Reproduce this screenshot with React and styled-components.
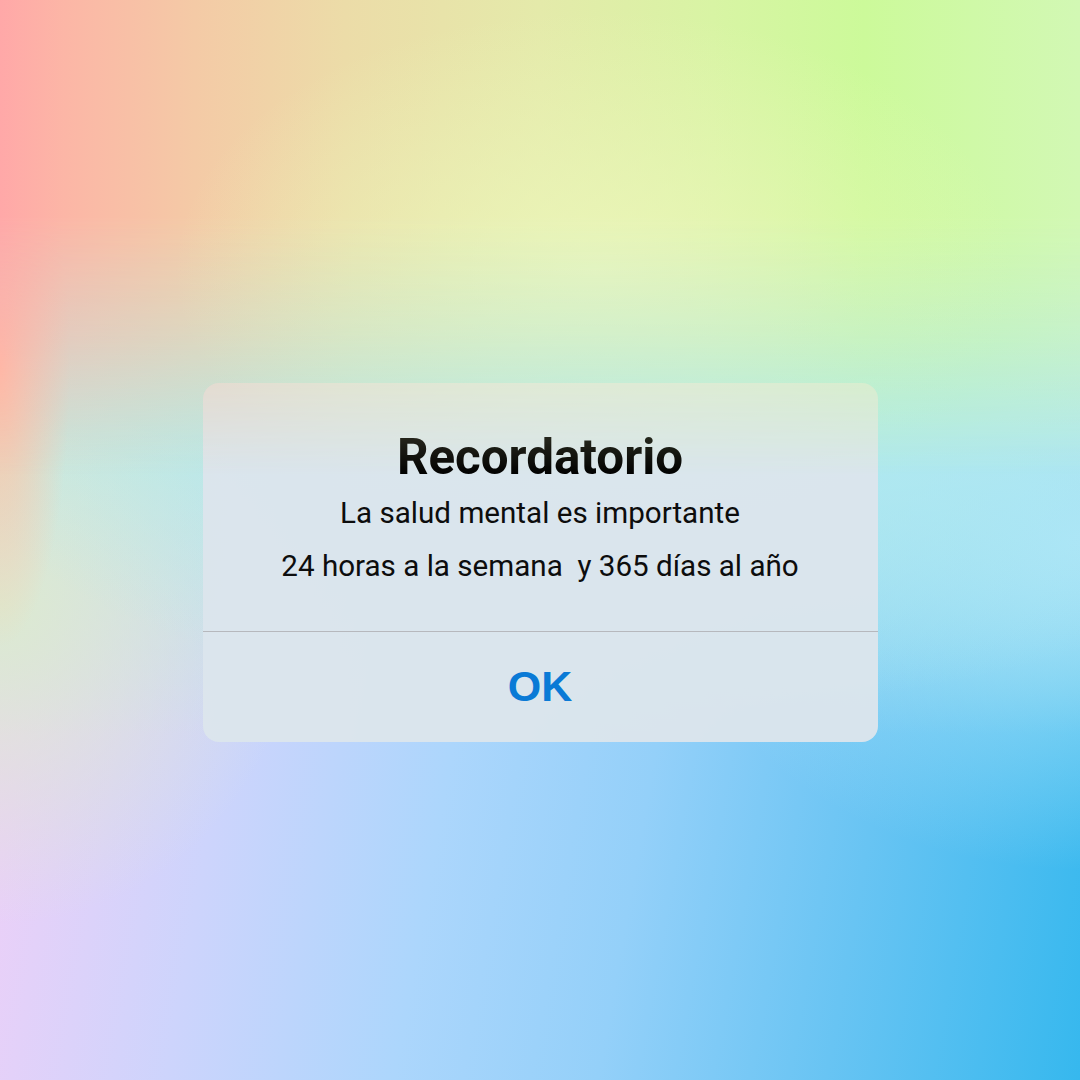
import React from "react";
import styled, { createGlobalStyle } from "styled-components";

const Global = createGlobalStyle`
  html, body { margin: 0; padding: 0; }
  body { font-family: Roboto, "Liberation Sans", sans-serif; }
`;

const Scene = styled.div`
  width: 1080px;
  height: 1080px;
  display: grid;
  grid-template: 1fr / 1fr;
  background:
    radial-gradient(ellipse 70px 280px at 0% 34%, rgba(255,196,166,1), rgba(255,196,166,0)),
    radial-gradient(ellipse 700px 280px at 60% 40%, rgba(176,234,240,1), rgba(176,234,240,0)),
    radial-gradient(ellipse 300px 320px at 0% 56%, rgba(220,234,208,1), rgba(220,234,208,0)),
    radial-gradient(ellipse 420px 330px at 100% 50%, rgba(170,228,248,1), rgba(170,228,248,0)),
    linear-gradient(180deg, #d0eed4 0%, #bae9e6 40%, rgba(182,232,236,0) 68%),
    linear-gradient(100deg, #f8d0f4 0%, #ead0f8 12%, #cdd4fc 28%, #acd6fc 46%, #94d0f9 62%, #68c4f3 80%, #36b8ee 100%);
`;

const Glow = styled.div`
  grid-area: 1 / 1;
  background:
    radial-gradient(ellipse 420px 260px at 55% 25%, rgba(236,246,186,0.9), rgba(236,246,186,0)),
    linear-gradient(90deg, #ffa8a8 0%, #fcb6a6 6%, #f4caa6 18%, #ecdca8 32%, #e4eaaa 50%, #d8f4a4 66%, #ccfa9a 80%, #d2f8b4 100%);
  -webkit-mask-image: linear-gradient(180deg, #000 0%, #000 20%, rgba(0,0,0,0.6) 31%, transparent 44%);
  mask-image: linear-gradient(180deg, #000 0%, #000 20%, rgba(0,0,0,0.6) 31%, transparent 44%);
`;

const Stage = styled.div`
  grid-area: 1 / 1;
  display: flex;
  justify-content: center;
  align-items: flex-start;
  padding-top: 383px;
`;

const Dialog = styled.div`
  width: 675px;
  height: 359px;
  border-radius: 16px;
  background: rgba(220, 229, 236, 0.96);
  display: flex;
  flex-direction: column;
  overflow: hidden;
`;

const Body = styled.div`
  height: 249px;
  display: flex;
  flex-direction: column;
  align-items: center;
  padding-top: 44px;
  box-sizing: border-box;
  border-bottom: 1px solid #b6b8bd;
`;

const Title = styled.h1`
  margin: 0;
  font-family: Roboto, sans-serif;
  font-weight: 700;
  font-size: 49.3px;
  line-height: 60px;
  color: #000;
`;

const Line = styled.p`
  margin: ${(p) => p.$top}px 0 0;
  font-family: Roboto, sans-serif;
  font-weight: 400;
  font-size: 29.6px;
  line-height: 36px;
  color: #0d0d0d;
`;

const Action = styled.button`
  flex: 1;
  border: none;
  background: transparent;
  font-family: "Liberation Sans", Arial, sans-serif;
  font-weight: 700;
  font-size: 43px;
  color: #0a7ad6;
  padding: 0 0 2px;
  cursor: pointer;
`;

export default function App() {
  return (
    <>
      <Global />
      <Scene>
        <Glow />
        <Stage>
          <Dialog>
            <Body>
              <Title>Recordatorio</Title>
              <Line $top={8}>La salud mental es importante</Line>
              <Line $top={17}>24 horas a la semana{"\u00a0"} y 365 días al año</Line>
            </Body>
            <Action>OK</Action>
          </Dialog>
        </Stage>
      </Scene>
    </>
  );
}
